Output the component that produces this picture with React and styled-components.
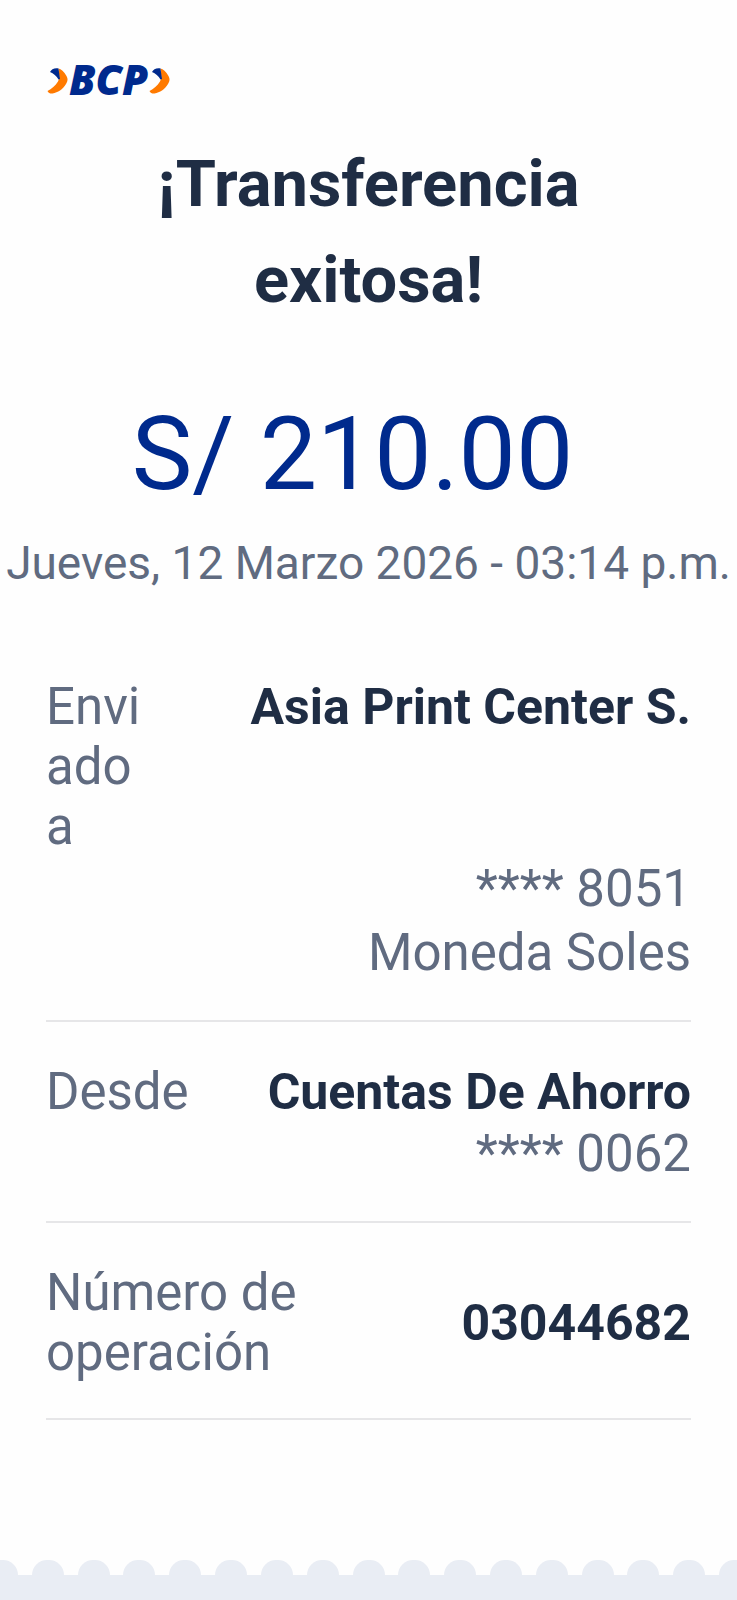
import React from 'react';
import styled, { createGlobalStyle } from 'styled-components';

const GlobalStyle = createGlobalStyle`
  * {
    box-sizing: border-box;
  }

  body {
    margin: 0;
    background-color: #fefefe;
    font-family: Roboto, 'Liberation Sans', sans-serif;
    color: #1f2d44;
  }
`;

const ReceiptContainer = styled.div`
  display: flex;
  flex-direction: column;
  min-height: 100vh;
  overflow: hidden;
`;

const Header = styled.header`
  display: flex;
  padding: 48px 46px 0;
`;

const LogoSvg = styled.svg`
  display: block;
  width: 126px;
  height: 64px;
`;

const Summary = styled.section`
  display: flex;
  flex-direction: column;
  align-items: center;
  text-align: center;
`;

const Title = styled.h1`
  max-width: 480px;
  margin: 24px 0 0;
  font-size: 65px;
  line-height: 96px;
  font-weight: 700;
`;

const Amount = styled.p`
  margin: 64px 0 0;
  padding-right: 32px;
  font-size: 102px;
  line-height: 124px;
  color: #002a8d;
`;

const DateText = styled.p`
  margin: 17px 0 0;
  font-size: 46px;
  line-height: 60px;
  white-space: nowrap;
  color: #606b80;
`;

const Details = styled.dl`
  margin: 84px 46px 0;
`;

const DetailRow = styled.div`
  padding-bottom: 35px;
  margin-bottom: 40px;
  border-bottom: 2px solid #e6e6e8;
`;

const DetailLine = styled.div`
  display: flex;
  justify-content: space-between;
  align-items: ${({ $align }) => $align || 'flex-start'};
`;

const Label = styled.dt`
  max-width: ${({ $narrow }) => ($narrow ? '100px' : '50%')};
  font-size: 51px;
  line-height: 60px;
  overflow-wrap: anywhere;
  color: #606b80;
`;

const Value = styled.dd`
  margin: 0;
  font-size: 50px;
  line-height: 60px;
  font-weight: 700;
  text-align: right;
  white-space: nowrap;
`;

const SubValue = styled.dd`
  margin: 0;
  font-size: 51px;
  line-height: 64px;
  text-align: right;
  color: #606b80;
`;

const Footer = styled.footer`
  margin-top: auto;
`;

const Scallops = styled.div`
  display: flex;
  justify-content: space-between;
  margin: 0 -14px;
`;

const Scallop = styled.span`
  flex: none;
  width: 32px;
  height: 15px;
  border-radius: 16px 16px 0 0;
  background-color: #e9edf4;
`;

const FooterBar = styled.div`
  height: 25px;
  background-color: #e9edf4;
`;

const LogoArrow = ({ x }) => (
  <g transform={`translate(${x} 0)`}>
    <path
      d="M12.5 4.5C15 5 18 7.5 20.5 12C22 14.5 22 17 20 20C16.5 25.5 12 28.5 6.5 29.5C4.5 29.8 2.5 29 1.5 27C5.5 25 9.5 21.5 12 17.5C12.8 16 13.2 14.5 13.3 13Z"
      fill="#ff7a00"
    />
    <path d="M4 8C5.5 5.5 8 3.8 12.5 4.5L14 15L12.5 15.5C10.5 12 7.5 9.5 4 8Z" fill="#002a8d" />
  </g>
);

const Logo = () => (
  <LogoSvg viewBox="0 -16 126 64" role="img" aria-label="BCP">
    <LogoArrow x={0} />
    <text
      x="23"
      y="31"
      fontFamily="'Open Sans', sans-serif"
      fontSize="42"
      fontWeight="800"
      fontStyle="italic"
      fill="#002a8d"
    >
      BCP
    </text>
    <LogoArrow x={102} />
  </LogoSvg>
);

const App = () => {
  return (
    <>
      <GlobalStyle />
      <ReceiptContainer>
        <Header>
          <Logo />
        </Header>
        <main>
          <Summary>
            <Title>¡Transferencia exitosa!</Title>
            <Amount>S/ 210.00</Amount>
            <DateText>Jueves, 12 Marzo 2026 - 03:14 p.m.</DateText>
          </Summary>
          <Details>
            <DetailRow>
              <DetailLine>
                <Label $narrow>Enviado a</Label>
                <Value>Asia Print Center S.</Value>
              </DetailLine>
              <SubValue>**** 8051</SubValue>
              <SubValue>Moneda Soles</SubValue>
            </DetailRow>
            <DetailRow>
              <DetailLine>
                <Label>Desde</Label>
                <Value>Cuentas De Ahorro</Value>
              </DetailLine>
              <SubValue>**** 0062</SubValue>
            </DetailRow>
            <DetailRow>
              <DetailLine $align="center">
                <Label>Número de operación</Label>
                <Value>03044682</Value>
              </DetailLine>
            </DetailRow>
          </Details>
        </main>
        <Footer>
          <Scallops aria-hidden="true">
            {Array.from({ length: 17 }, (_, i) => (
              <Scallop key={i} />
            ))}
          </Scallops>
          <FooterBar />
        </Footer>
      </ReceiptContainer>
    </>
  );
};

export default App;
